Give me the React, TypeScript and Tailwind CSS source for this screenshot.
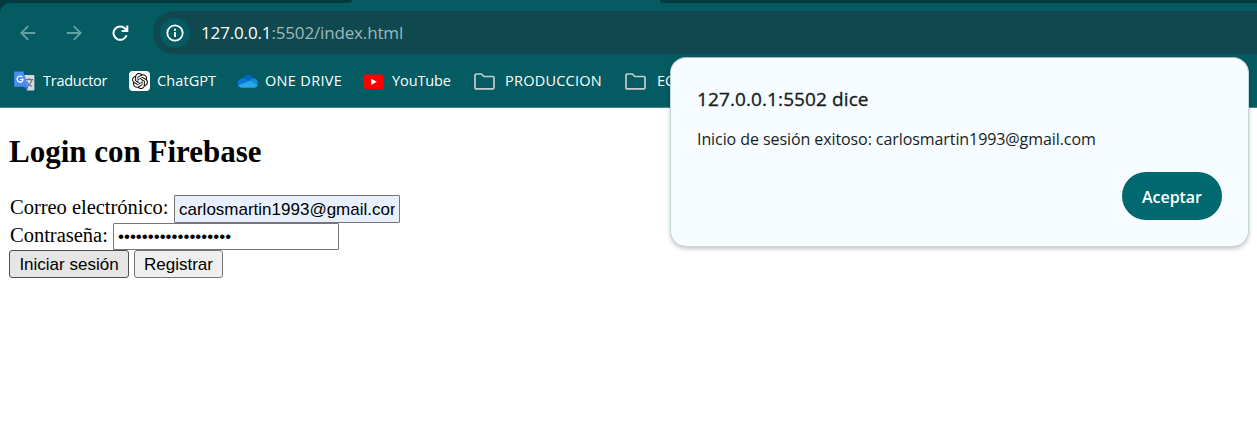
import type { ReactNode } from 'react';

const UI = "font-['Open_Sans','Noto_Sans',sans-serif]";

function BackIcon({ flip = false }: { flip?: boolean }) {
  return (
    <svg width="16" height="16" viewBox="0 0 16 16" fill="none" stroke="#659fa3" strokeWidth="1.9" className={flip ? 'rotate-180' : ''}>
      <path d="M15.2 8H1.6M8.2 1.2 1.4 8l6.800 6.800" />
    </svg>
  );
}

function ReloadIcon() {
  return (
    <svg width="17" height="16" viewBox="0 0 17 16" fill="none" stroke="#fff" strokeWidth="2">
      <path d="M14.600 10.200A6.700 6.700 0 1 1 13.100 3.500L15 5.400" />
      <path d="M15.300 0.400V6H9.600" />
    </svg>
  );
}

function InfoIcon() {
  return (
    <svg width="18" height="18" viewBox="0 0 18 18" fill="none" stroke="#fff" strokeWidth="1.8">
      <circle cx="9" cy="9" r="7.700" />
      <path d="M9 8v5M9 4.800v1.900" strokeWidth="1.900" />
    </svg>
  );
}

function TranslateIcon() {
  return (
    <svg width="21" height="20" viewBox="0 0 21 20">
      <path d="M8 4h11.300c.6 0 1.100.5 1.100 1.100v13.300c0 .6-.5 1.100-1.100 1.100H13z" fill="#d6d9de" />
      <path d="M11.500 8.600h7.700M15.200 7v1.600M17.800 8.800c-.6 3-2.500 5.300-4.800 6.600M12.800 10.500c1 2.200 2.800 4 5 5" fill="none" stroke="#62777f" strokeWidth="1.100" />
      <path d="M9.300 15.700h5L13 19.500z" fill="#3367d6" />
      <path d="M1.200.4h8.100l5 15.300H1.200C.6 15.700.2 15.300.2 14.700V1.500C.2.9.6.4 1.200.4z" fill="#4c8bf5" />
      <path d="M8.300 6a3 3 0 1 0 .8 2.400H6.300" fill="none" stroke="#fff" strokeWidth="1.300" />
    </svg>
  );
}

function ChatGptIcon() {
  return (
    <span className="flex h-5 w-[21px] items-center justify-center rounded-[4px] bg-white">
      <svg width="16" height="16" viewBox="0 0 24 24" fill="#111">
        <path d="M22.2819 9.8211a5.9847 5.9847 0 0 0-.5157-4.9108 6.0462 6.0462 0 0 0-6.5098-2.9A6.0651 6.0651 0 0 0 4.9807 4.1818a5.9847 5.9847 0 0 0-3.9977 2.9 6.0462 6.0462 0 0 0 .7427 7.0966 5.98 5.98 0 0 0 .511 4.9107 6.051 6.051 0 0 0 6.5146 2.9001A5.9847 5.9847 0 0 0 13.2599 24a6.0557 6.0557 0 0 0 5.7718-4.2058 5.9894 5.9894 0 0 0 3.9977-2.9001 6.0557 6.0557 0 0 0-.7475-7.0729zm-9.022 12.6081a4.4755 4.4755 0 0 1-2.8764-1.0408l.1419-.0804 4.7783-2.7582a.7948.7948 0 0 0 .3927-.6813v-6.7369l2.02 1.1686a.071.071 0 0 1 .038.052v5.5826a4.504 4.504 0 0 1-4.4945 4.4944zm-9.6607-4.1254a4.4708 4.4708 0 0 1-.5346-3.0137l.142.0852 4.783 2.7582a.7712.7712 0 0 0 .7806 0l5.8428-3.3685v2.3324a.0804.0804 0 0 1-.0332.0615L9.74 19.9502a4.4992 4.4992 0 0 1-6.1408-1.6464zM2.3408 7.8956a4.485 4.485 0 0 1 2.3655-1.9728V11.6a.7664.7664 0 0 0 .3879.6765l5.8144 3.3543-2.0201 1.1685a.0757.0757 0 0 1-.071 0l-4.8303-2.7865A4.504 4.504 0 0 1 2.3408 7.872zm16.5963 3.8558L13.1038 8.364 15.1192 7.2a.0757.0757 0 0 1 .071 0l4.8303 2.7913a4.4944 4.4944 0 0 1-.6765 8.1042v-5.6772a.79.79 0 0 0-.407-.667zm2.0107-3.0231l-.142-.0852-4.7735-2.7818a.7759.7759 0 0 0-.7854 0L9.409 9.2297V6.8974a.0662.0662 0 0 1 .0284-.0615l4.8303-2.7866a4.4992 4.4992 0 0 1 6.6802 4.66zM8.3065 12.863l-2.02-1.1638a.0804.0804 0 0 1-.038-.0567V6.0742a4.4992 4.4992 0 0 1 7.3757-3.4537l-.142.0805L8.704 5.459a.7948.7948 0 0 0-.3927.6813zm1.0976-2.3654l2.602-1.4998 2.6069 1.4998v2.9994l-2.5974 1.4997-2.6067-1.4997Z" />
      </svg>
    </span>
  );
}

function OneDriveIcon() {
  return (
    <svg width="21" height="14" viewBox="0 0 21 14">
      <path d="M5 5C6.500 2 8.500.5 11 .5c2.500 0 4.700 1.500 5.800 4.300L12 9z" fill="#0364b8" />
      <path d="M4.600 13.500A4.600 4.600 0 0 1 4.600 4.400c1.900-.3 3.300.1 4.700.9l5 3L5 12.700z" fill="#0a78d4" />
      <path d="M12.300 7.300c1.200-1.700 2.700-2.700 4.400-2.700 2.200 0 4 1.800 4 4.300 0 .9-.1 1.700-.5 2.400z" fill="#1490df" />
      <path d="M1.300 11.600 12.800 6.800l7.700 4.500c-.5 1.400-1.700 2.400-3.300 2.400H4.800c-1.500 0-2.800-.8-3.500-2.100z" fill="#28a8ea" />
    </svg>
  );
}

function YouTubeIcon() {
  return (
    <svg width="21" height="16" viewBox="0 0 21 16" className="mt-px">
      <rect x="0.300" y="0.500" width="20.400" height="14.600" rx="3" fill="#f00" />
      <path d="M8.200 4.700v6.200l5.600-3.100z" fill="#fff" />
    </svg>
  );
}

function FolderIcon() {
  return (
    <svg width="21" height="17" viewBox="0 0 21 17" fill="none" stroke="#c5cccd" strokeWidth="1.700" strokeLinejoin="round">
      <path d="M1 2.200C1 1.500 1.500 1 2.200 1h5.300l2.300 2.500h9c.7 0 1.200.5 1.200 1.200v10c0 .7-.5 1.200-1.200 1.200H2.200C1.500 15.900 1 15.400 1 14.700z" />
    </svg>
  );
}

function Bookmark({ icon, width, children, label }: { icon: ReactNode; width: string; label: string; children: ReactNode }) {
  return (
    <a className={`flex shrink-0 items-center ${width}`}>
      <span className="flex w-[21px] shrink-0 justify-center">{icon}</span>
      <span className={`whitespace-nowrap text-white ${label}`}>{children}</span>
    </a>
  );
}

function BrowserChrome() {
  return (
    <header className={`h-[108px] overflow-hidden border-b border-[#468a91] bg-[#033a40] ${UI}`}>
      <div className="flex h-[3px] justify-between bg-[linear-gradient(90deg,#033a40_20px,#045b62_20px)]">
        <div className="w-[352px] rounded-br-[3px] bg-[#033a40]" />
        <div className="w-[597px] rounded-bl-[3px] bg-[#033a40]" />
      </div>
      <div className="h-[104px] rounded-tl-[10px] bg-[#045b62]">
        <div className="flex h-[59px] items-center pl-5">
          <div className="flex w-[133px] items-center gap-[30px]">
            <BackIcon />
            <BackIcon flip />
            <ReloadIcon />
          </div>
          <div className="flex h-[43px] flex-1 items-center rounded-l-full bg-[#0f484f] pl-[7px]">
            <span className="flex size-[30px] items-center justify-center rounded-full bg-[#045b62]">
              <InfoIcon />
            </span>
            <span className="ml-[11px] text-[17px] tracking-[-0.15px] text-white">
              127.0.0.1<span className="text-[#9fb8ba]">:5502/index.html</span>
            </span>
          </div>
        </div>
        <nav className="flex h-[38px] items-center pl-3.5 text-[14.500px]">
          <Bookmark icon={<TranslateIcon />} width="w-[115px]" label="ml-2 tracking-[-0.25px]">Traductor</Bookmark>
          <Bookmark icon={<ChatGptIcon />} width="w-[108px]" label="ml-[7px] tracking-[0.1px]">ChatGPT</Bookmark>
          <Bookmark icon={<OneDriveIcon />} width="w-[126px]" label="ml-[7px] tracking-[0.32px]">ONE DRIVE</Bookmark>
          <Bookmark icon={<YouTubeIcon />} width="w-[111px]" label="ml-2 tracking-[-0.1px]">YouTube</Bookmark>
          <Bookmark icon={<FolderIcon />} width="w-[151px]" label="ml-2.5 tracking-[0.24px]">PRODUCCION</Bookmark>
          <Bookmark icon={<FolderIcon />} width="w-[80px]" label="ml-[11px]">ECOM</Bookmark>
        </nav>
      </div>
    </header>
  );
}

function LoginPage() {
  return (
    <main className="pt-[25px] pl-[9px] font-['Liberation_Serif',serif] text-black">
      <h2 className="h-[62px] text-[31px] leading-[38px] font-bold">Login con Firebase</h2>
      <form className="text-[20.500px]">
        <div className="flex h-7 items-start">
          <label className="w-[165px] pl-px leading-6 tracking-[-0.02px] whitespace-nowrap">Correo electrónico:</label>
          <input readOnly value="carlosmartin1993@gmail.com" className="h-7 w-[226px] rounded-[1px] border border-[#767676] bg-[#e8f0fe] px-1 pt-0.5 font-['Liberation_Sans',sans-serif] text-[17px]" />
        </div>
        <div className="flex h-[27px] items-start">
          <label className="w-[104px] pl-px leading-6 whitespace-nowrap">Contraseña:</label>
          <input readOnly type="password" value="contrasena-de-1993x" className="h-[27px] w-[226px] rounded-[1px] border border-[#767676] bg-white px-1 font-['Liberation_Sans',sans-serif] text-[17px]" />
        </div>
        <div className="flex gap-[5px] font-['Liberation_Sans',sans-serif] text-[17px]">
          <button type="button" className="h-7 w-[120px] rounded-[3px] border border-[#4f4f4f] bg-[#e5e5e5] pt-0.5 leading-6 whitespace-nowrap">Iniciar sesión</button>
          <button type="button" className="h-7 w-[89px] rounded-[3px] border border-[#767676] bg-[#efefef] pt-0.5 leading-6 whitespace-nowrap">Registrar</button>
        </div>
      </form>
    </main>
  );
}

function AlertDialog() {
  return (
    <section role="alertdialog" className={`absolute top-[57px] left-[670px] flex h-[190px] w-[579px] flex-col rounded-2xl border border-[#c3d5d7] border-t-[#9fbfc2] bg-[#f6fcff] px-[26px] pt-[27px] text-[#171d1e] shadow-[0_2px_4px_rgba(0,0,0,0.22)] ${UI}`}>
      <h1 className="h-[42px] text-[19px] leading-[28px] tracking-[0.1px] [-webkit-text-stroke:0.35px_#171d1e]">127.0.0.1:5502 dice</h1>
      <p className="h-[45px] text-[16px] leading-6 tracking-[-0.08px]">Inicio de sesión exitoso: carlosmartin1993@gmail.com</p>
      <button type="button" className="h-12 w-[100px] shrink-0 self-end rounded-full bg-[#006970] pt-0.5 text-[16px] font-semibold tracking-[-0.05px] text-white">Aceptar</button>
    </section>
  );
}

export default function App() {
  return (
    <div className="relative h-[431px] w-[1257px] overflow-hidden bg-white">
      <BrowserChrome />
      <LoginPage />
      <AlertDialog />
    </div>
  );
}
